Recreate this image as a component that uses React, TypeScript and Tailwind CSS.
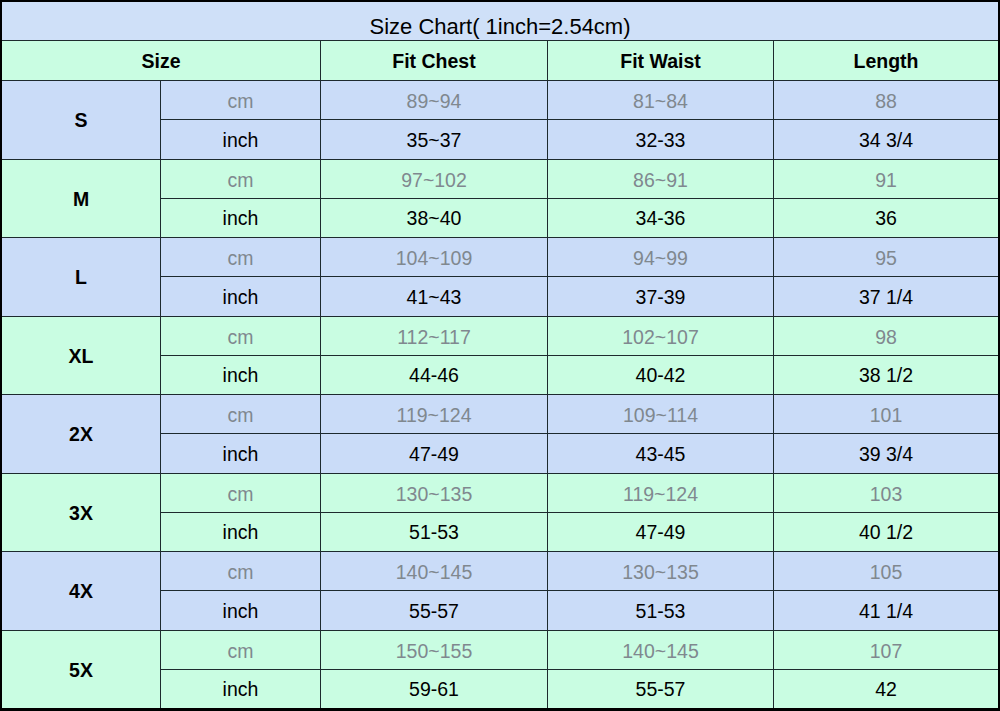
import React from "react";

const rows = [
  { size: "S", cm: ["89~94", "81~84", "88"], inch: ["35~37", "32-33", "34 3/4"] },
  { size: "M", cm: ["97~102", "86~91", "91"], inch: ["38~40", "34-36", "36"] },
  { size: "L", cm: ["104~109", "94~99", "95"], inch: ["41~43", "37-39", "37 1/4"] },
  { size: "XL", cm: ["112~117", "102~107", "98"], inch: ["44-46", "40-42", "38 1/2"] },
  { size: "2X", cm: ["119~124", "109~114", "101"], inch: ["47-49", "43-45", "39 3/4"] },
  { size: "3X", cm: ["130~135", "119~124", "103"], inch: ["51-53", "47-49", "40 1/2"] },
  { size: "4X", cm: ["140~145", "130~135", "105"], inch: ["55-57", "51-53", "41 1/4"] },
  { size: "5X", cm: ["150~155", "140~145", "107"], inch: ["59-61", "55-57", "42"] },
];

export default function App() {
  return (
    <div
      className="w-[1000px] h-[711px] border-t-2 border-l-2 border-r-2 border-b-[3px] border-black bg-black overflow-hidden"
      style={{ fontFamily: '"Liberation Sans", Arial, sans-serif' }}
    >
      <div className="grid h-full grid-cols-[158px_159px_226px_225px_224px] grid-rows-[38px_39px_repeat(16,1fr)] gap-px bg-[#1d2a2e] text-[19.5px] text-black">
        <div className="col-span-5 flex items-end justify-center bg-[#cfe0f8] pb-[1px] text-[22px] leading-none">
          <span className="translate-y-[-1px]">Size Chart( 1inch=2.54cm)</span>
        </div>
        <div className="col-span-2 flex items-center justify-center bg-[#c9fde2] pt-[2px] font-bold">Size</div>
        <div className="flex items-center justify-center bg-[#c9fde2] pt-[2px] font-bold">Fit Chest</div>
        <div className="flex items-center justify-center bg-[#c9fde2] pt-[2px] font-bold">Fit Waist</div>
        <div className="flex items-center justify-center bg-[#c9fde2] pt-[2px] font-bold">Length</div>
        {rows.map((r, i) => {
          const bg = i % 2 === 0 ? "bg-[#cadcf8]" : "bg-[#c9fde2]";
          return (
            <React.Fragment key={r.size}>
              <div className={`row-span-2 flex items-center justify-center pt-[2px] font-bold ${bg}`}>{r.size}</div>
              <div className={`flex items-center justify-center pt-[3px] text-[#80888f] ${bg}`}>cm</div>
              {r.cm.map((v, j) => (
                <div key={"c" + j} className={`flex items-center justify-center pt-[3px] text-[#80888f] ${bg}`}>{v}</div>
              ))}
              <div className={`flex items-center justify-center pt-[2px] ${bg}`}>inch</div>
              {r.inch.map((v, j) => (
                <div key={"i" + j} className={`flex items-center justify-center pt-[2px] ${bg}`}>{v}</div>
              ))}
            </React.Fragment>
          );
        })}
      </div>
    </div>
  );
}
